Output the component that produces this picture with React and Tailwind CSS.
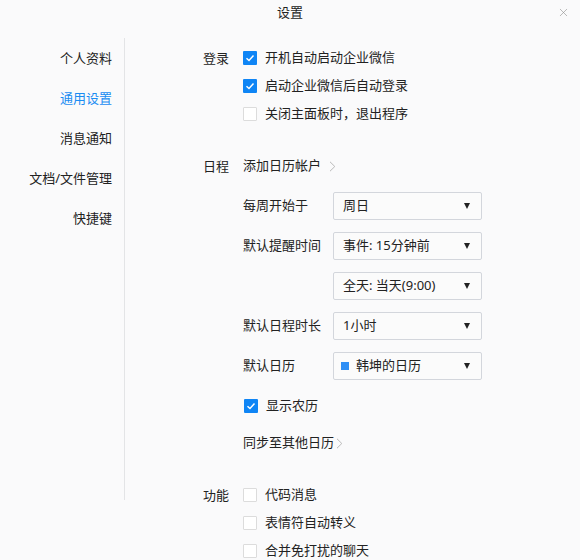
import React from "react";
import { X } from "lucide-react";

const NAV = ["个人资料", "通用设置", "消息通知", "文档/文件管理", "快捷键"];

function Checkbox({ checked }) {
  if (!checked) {
    return <span className="w-[14px] h-[14px] shrink-0 rounded-[1px] border border-[#dcdcdc] bg-white" />;
  }
  return (
    <span className="w-[14px] h-[14px] shrink-0 rounded-[1px] bg-[#0f85f5] flex items-center justify-center">
      <svg width="10" height="10" viewBox="0 0 10 10" fill="none">
        <path d="M1.5 5.2 L4 7.5 L8.5 2.6" stroke="#fff" strokeWidth="1.5" />
      </svg>
    </span>
  );
}

function CheckRow({ checked, label, className = "" }) {
  return (
    <div className={`h-[28px] flex items-center gap-2 ${className}`}>
      <Checkbox checked={checked} />
      <span>{label}</span>
    </div>
  );
}

function Chevron() {
  return (
    <svg width="7" height="11" viewBox="0 0 7 11" fill="none" className="shrink-0">
      <path d="M1 0.8 L5.8 5.5 L1 10.2" stroke="#b9b9b9" strokeWidth="1" />
    </svg>
  );
}

function Select({ children }) {
  return (
    <div className="w-[149px] h-[28px] pl-[9px] pr-[11px] flex items-center justify-between rounded-[2px] border border-[#d3d6dc] bg-[#fbfbfb]">
      <span className="flex items-center">{children}</span>
      <span className="w-0 h-0 border-x-[3.5px] border-x-transparent border-t-[6px] border-t-[#222]" />
    </div>
  );
}

function SelectRow({ label, children }) {
  return (
    <div className="flex items-center h-[28px] mb-[12px]">
      <span className="w-[90px] shrink-0">{label}</span>
      <Select>{children}</Select>
    </div>
  );
}

function Section({ title, children, className = "" }) {
  return (
    <div className={`flex ${className}`}>
      <div className="w-[118px] shrink-0 pr-[14px] h-[28px] leading-[28px] text-right">{title}</div>
      <div className="flex-1 min-w-0">{children}</div>
    </div>
  );
}

export default function App() {
  return (
    <div className="relative w-[580px] h-[560px] overflow-hidden bg-[#fafafb] text-[13px] text-[#222] font-['Noto_Sans','Noto_Sans_CJK_SC',sans-serif]">
      <div className="h-[38px] pt-[2px] flex items-center justify-center pb-[14px]">设置</div>
      <button className="absolute top-[6px] right-[10px] text-[#8c8c8c]">
        <X size={13} strokeWidth={1.1} />
      </button>

      <div className="flex items-start">
        <div className="w-[125px] h-[462px] shrink-0 border-r border-[#e3e4e6] pr-[12px] pt-[5px] text-right">
          {NAV.map((item, i) => (
            <div key={item} className={`h-[40px] leading-[30px] ${i === 1 ? "text-[#1b8cf2]" : ""}`}>
              {item}
            </div>
          ))}
        </div>

        <div className="flex-1 min-w-0 pt-[6px]">
          <Section title="登录">
            <CheckRow checked label="开机自动启动企业微信" />
            <CheckRow checked label="启动企业微信后自动登录" />
            <CheckRow label="关闭主面板时，退出程序" />
          </Section>

          <Section title="日程" className="mt-[24px]">
            <div className="h-[28px] flex items-center gap-[8px]">
              <span>添加日历帐户</span>
              <Chevron />
            </div>
            <div className="mt-[12px]">
              <SelectRow label="每周开始于">周日</SelectRow>
              <SelectRow label="默认提醒时间">事件: 15分钟前</SelectRow>
              <SelectRow label="">全天: 当天(9:00)</SelectRow>
              <SelectRow label="默认日程时长">1小时</SelectRow>
              <SelectRow label="默认日历">
                <span className="w-[8px] h-[8px] -ml-[2px] bg-[#2e8ff5] mr-[7px]" />
                韩坤的日历
              </SelectRow>
            </div>
            <CheckRow checked label="显示农历" className="ml-[1px] mt-[1px]" />
            <div className="h-[28px] mt-[9px] flex items-center gap-[2px]">
              <span>同步至其他日历</span>
              <Chevron />
            </div>
          </Section>

          <Section title="功能" className="mt-[24px]">
            <CheckRow label="代码消息" />
            <CheckRow label="表情符自动转义" />
            <CheckRow label="合并免打扰的聊天" />
          </Section>
        </div>
      </div>
    </div>
  );
}
